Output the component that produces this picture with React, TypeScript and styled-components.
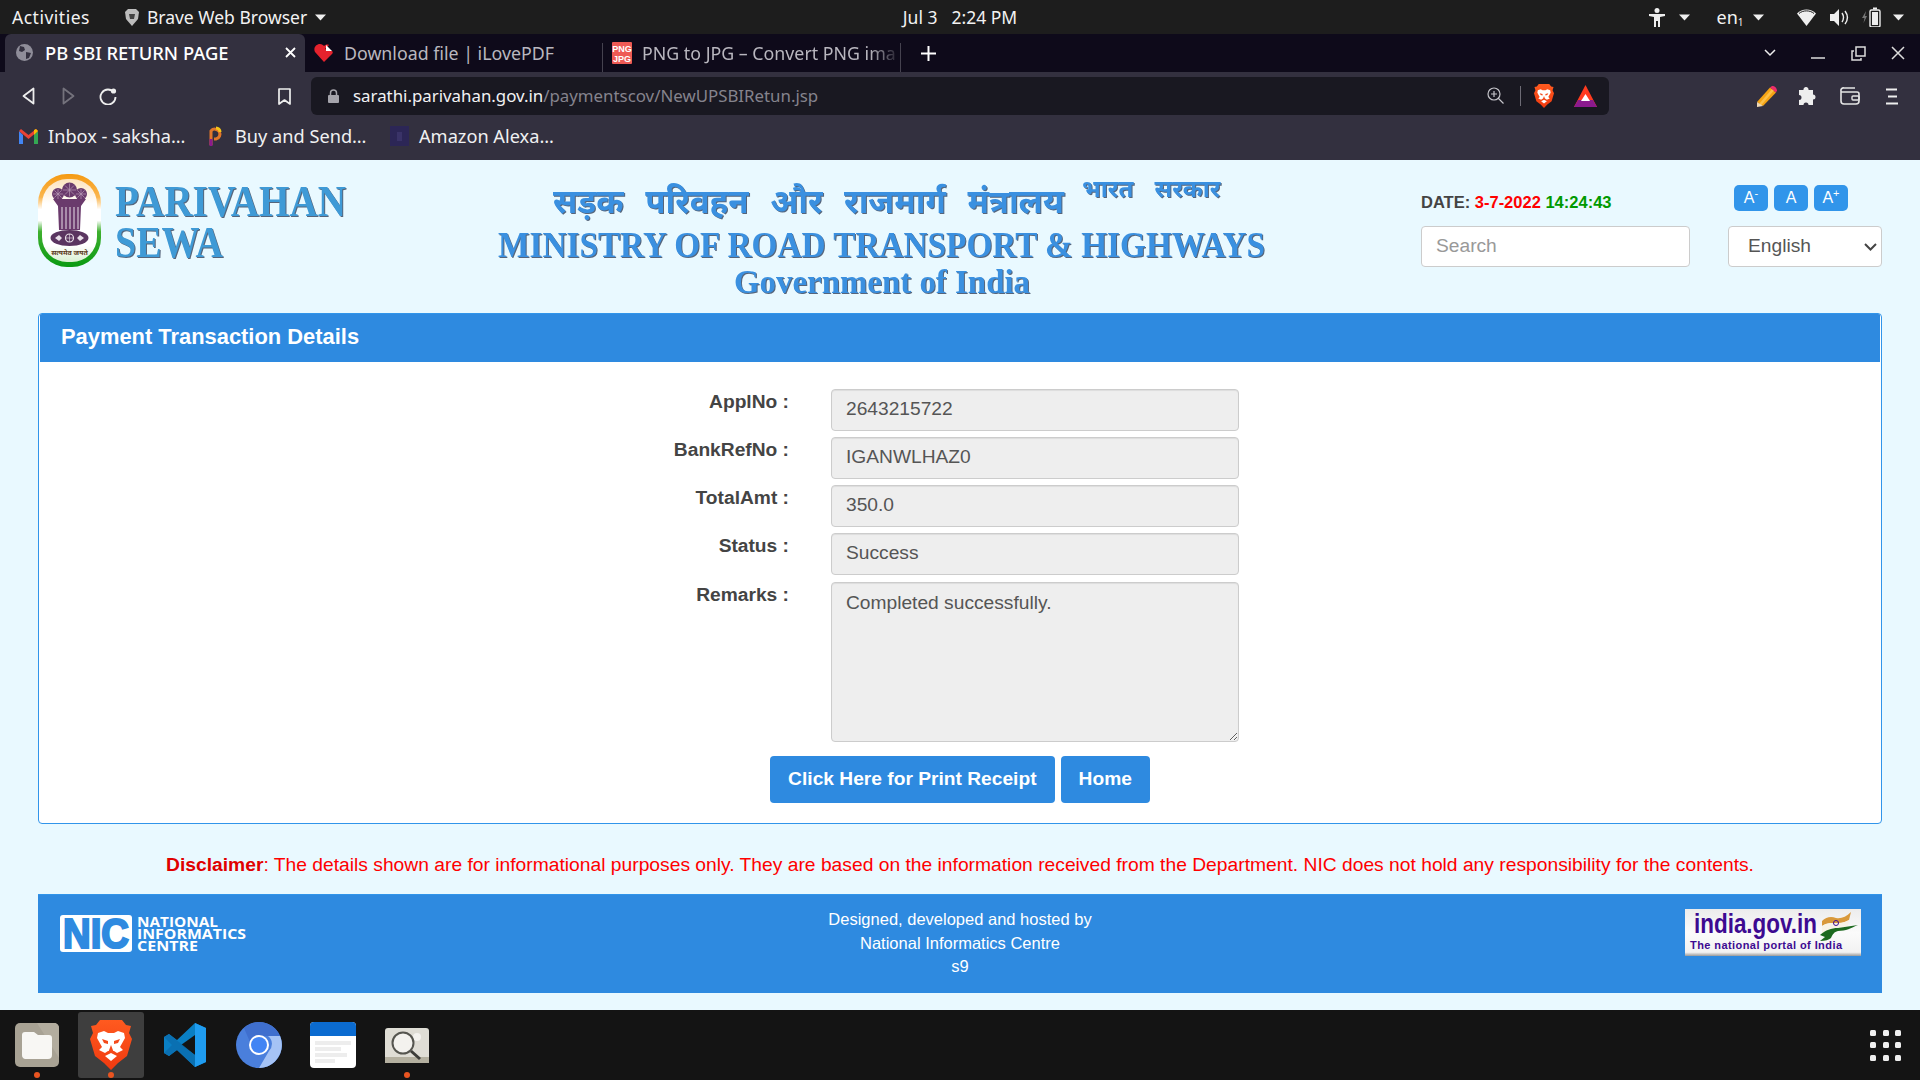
import React from "react"
import styled, { createGlobalStyle } from "styled-components"

const Global = createGlobalStyle`
  html, body { margin: 0; padding: 0; background: #e9f9ff; }
  * { box-sizing: border-box; }
`

const ubuntuLike = `"Noto Sans", "Open Sans", sans-serif`
const arial = `"Liberation Sans", Arial, sans-serif`
const serif = `"Liberation Serif", serif`
const hindi = `"Noto Sans", "DejaVu Sans", sans-serif`

const Screen = styled.div`
  width: 1920px;
  height: 1080px;
  overflow: hidden;
  display: flex;
  flex-direction: column;
  font-family: ${arial};
  svg { flex: none; }
`

/* gnome top bar */
const TopBar = styled.div`
  height: 34px;
  flex: none;
  background: #1d1d1d;
  color: #f2f2f2;
  font-family: ${ubuntuLike};
  font-size: 17.5px;
  display: grid;
  grid-template-columns: 1fr auto 1fr;
  align-items: center;
`
const TopLeft = styled.div`
  display: flex;
  align-items: center;
  padding-left: 12px;
`
const Activities = styled.span`
  letter-spacing: 0.5px;
`
const AppMenu = styled.div`
  display: flex;
  align-items: center;
  margin-left: 35px;
  gap: 8px;
`
const Clock = styled.div`
  display: flex;
  gap: 14px;
`
const Tray = styled.div`
  display: flex;
  align-items: center;
  justify-content: flex-end;
  padding-right: 12px;
`
const Slot = styled.div<{ $w: number; $ml?: number }>`
  width: ${p => p.$w}px;
  margin-left: ${p => p.$ml ?? 0}px;
  flex: none;
  display: flex;
  align-items: center;
  justify-content: center;
`
const Lang = styled.span`
  font-size: 18px;
  sub { font-size: 10px; vertical-align: -2px; }
`

/* browser tabs */
const TabStrip = styled.div`
  height: 38px;
  flex: none;
  background: #0e0a1a;
  font-family: ${ubuntuLike};
  display: flex;
  align-items: stretch;
  padding-left: 5px;
`
const ActiveTab = styled.div`
  width: 300px;
  background: #33303f;
  border-radius: 6px 6px 0 0;
  color: #fff;
  font-size: 18.4px;
  font-weight: 500;
  display: flex;
  align-items: center;
  padding: 0 9px 1px 11px;
  gap: 12px;
`
const TabTitle = styled.span`
  flex: 1;
  white-space: nowrap;
`
const Tab = styled.div<{ $w: number }>`
  width: ${p => p.$w}px;
  display: flex;
  align-items: center;
  gap: 10px;
  padding: 0 0 1px 9px;
  color: #b9b7bf;
  font-size: 17.8px;
  white-space: nowrap;
  position: relative;
  overflow: hidden;
  &::after {
    content: "";
    position: absolute;
    right: 0;
    top: 9px;
    bottom: 0;
    width: 1px;
    background: #45424f;
  }
`
const FadeText = styled.span`
  display: block;
  overflow: hidden;
  width: 100%;
  -webkit-mask-image: linear-gradient(to right, #000 88%, transparent 100%);
  mask-image: linear-gradient(to right, #000 88%, transparent 100%);
`
const WindowControls = styled.div`
  margin-left: auto;
  display: flex;
  align-items: center;
  padding-right: 2px;
`

/* browser toolbar */
const Toolbar = styled.div`
  height: 53px;
  flex: none;
  background: #33303f;
  display: flex;
  align-items: flex-start;
  padding: 5px 8px 0;
`
const ToolSlot = styled.div<{ $ml?: number }>`
  width: 40px;
  height: 38px;
  flex: none;
  margin-left: ${p => p.$ml ?? 0}px;
  display: flex;
  align-items: center;
  justify-content: center;
`
const UrlBar = styled.div`
  width: 1298px;
  height: 38px;
  margin-left: 7px;
  background: #191821;
  border-radius: 6px;
  display: flex;
  align-items: center;
  padding: 0 12px 1px 17px;
  font-family: ${ubuntuLike};
  font-size: 16.85px;
`
const UrlHost = styled.span`
  color: #f2f2f4;
  margin-left: 14px;
`
const UrlPath = styled.span`
  color: #85838d;
  flex: 1;
`
const UrlDivider = styled.span`
  width: 1px;
  height: 20px;
  background: #6d6b75;
  margin: 0 13px 0 16px;
`
const RewardsIcon = styled.svg`
  margin-left: 20px;
`
const ToolRight = styled.div`
  margin-left: auto;
  display: flex;
`

const Bookmarks = styled.div`
  height: 35px;
  flex: none;
  background: #33303f;
  display: flex;
  align-items: flex-start;
  padding: 0 0 0 19px;
  font-family: ${ubuntuLike};
  font-size: 18.2px;
  color: #f0f0f2;
`
const Bookmark = styled.div<{ $w: number; $gap: number }>`
  width: ${p => p.$w}px;
  display: flex;
  align-items: center;
  gap: ${p => p.$gap}px;
  height: 22px;
  white-space: nowrap;
`

/* parivahan page */
const Page = styled.div`
  flex: 1;
  background: #e9f9ff;
  padding: 0 38px;
  display: flex;
  flex-direction: column;
`
const Masthead = styled.header`
  height: 153px;
  flex: none;
  display: flex;
  align-items: flex-start;
`
const LogoSvg = styled.svg`
  display: block;
  margin-top: 14px;
  overflow: visible;
`
const BannerSvg = styled.svg`
  display: block;
  margin: 18px 0 0 152px;
  overflow: visible;
`
const LogoLetters = styled.g`
  filter: drop-shadow(1.4px 1.4px 0.5px rgba(60, 75, 100, 0.85));
`
const Tools = styled.div`
  margin-left: auto;
  width: 461px;
  padding-top: 25px;
  display: grid;
  grid-template-columns: 269px 154px;
  column-gap: 38px;
  row-gap: 15px;
  align-items: end;
`
const DateLine = styled.div`
  font-size: 16.5px;
  font-weight: 700;
  color: #444;
  line-height: 18px;
  white-space: nowrap;
`
const DateRed = styled.span`
  color: #ff0000;
`
const DateGreen = styled.span`
  color: #009a00;
`
const SizeButtons = styled.div`
  display: flex;
  gap: 6px;
  padding-left: 6px;
  height: 26px;
`
const SizeButton = styled.button`
  width: 34px;
  height: 26px;
  border: 0;
  padding: 0;
  border-radius: 5px;
  background: #3195ea;
  color: #fff;
  font-family: ${arial};
  font-size: 16px;
  sup { font-size: 11px; line-height: 0; }
`
const SearchInput = styled.input`
  width: 269px;
  height: 41px;
  border: 1px solid #ccc;
  border-radius: 4px;
  background: #fff;
  padding: 0 14px 2px;
  font-family: ${arial};
  font-size: 19.2px;
  outline: none;
  &::placeholder { color: #999; opacity: 1; }
`
const LangSelect = styled.select`
  width: 154px;
  height: 41px;
  border: 1px solid #ccc;
  border-radius: 4px;
  color: #555;
  padding: 0 0 2px 19px;
  font-family: ${arial};
  font-size: 19.2px;
  appearance: none;
  background: #fff url("data:image/svg+xml,%3Csvg xmlns='http://www.w3.org/2000/svg' width='13' height='8'%3E%3Cpath d='M1 1l5.500 5.500L12 1' fill='none' stroke='%23444' stroke-width='2'/%3E%3C/svg%3E") no-repeat right 4px center;
`

const Card = styled.section`
  height: 511px;
  flex: none;
  background: #fff;
  border: 1px solid #3195ea;
  border-radius: 4px;
  overflow: hidden;
`
const CardHeader = styled.div`
  height: 48px;
  margin: 0 1px;
  background: #2e8ae0;
  color: #fff;
  font-size: 21.9px;
  font-weight: 700;
  display: flex;
  align-items: center;
  padding: 0 0 2px 21px;
`
const Form = styled.form`
  padding-top: 27px;
  display: flex;
  flex-direction: column;
`
const Row = styled.div`
  display: grid;
  grid-template-columns: 750px 408px;
  column-gap: 42px;
  margin-bottom: 6px;
`
const RemarksRow = styled(Row)`
  margin-top: 1px;
`
const Label = styled.label`
  text-align: right;
  font-size: 19.2px;
  font-weight: 700;
  color: #444;
  line-height: 25px;
`
const FieldInput = styled.input`
  width: 408px;
  height: 42px;
  background: #eee;
  border: 1px solid #ccc;
  border-radius: 4px;
  box-shadow: inset 0 1px 1px rgba(0, 0, 0, 0.075);
  color: #555;
  padding: 0 14px 2px;
  font-family: ${arial};
  font-size: 19.2px;
  outline: none;
`
const FieldArea = styled.textarea`
  display: block;
  width: 408px;
  height: 160px;
  background: #eee;
  border: 1px solid #ccc;
  border-radius: 4px;
  box-shadow: inset 0 1px 1px rgba(0, 0, 0, 0.075);
  color: #555;
  padding: 6px 14px;
  font-family: ${arial};
  font-size: 19.2px;
  line-height: 27px;
  outline: none;
`
const Actions = styled.div`
  display: flex;
  justify-content: center;
  gap: 6px;
  margin-top: 8px;
`
const ActionButton = styled.button`
  height: 47px;
  border: 0;
  border-radius: 4px;
  background: #2e8ae0;
  color: #fff;
  padding: 0 18px 1px;
  font-family: ${arial};
  font-size: 19.2px;
  font-weight: 700;
`
const Disclaimer = styled.p`
  margin: 0;
  height: 70px;
  padding-top: 12px;
  display: flex;
  align-items: center;
  justify-content: center;
  color: #ff0000;
  font-size: 19.26px;
  white-space: pre;
  strong { color: #e00000; font-weight: 700; }
`
const Footer = styled.footer`
  height: 99px;
  flex: none;
  background: #2e8ae0;
  border-top: 1px solid #3195ea;
  display: grid;
  grid-template-columns: 1fr auto 1fr;
  color: #fff;
`
const FooterText = styled.div`
  text-align: center;
  font-size: 16.5px;
  line-height: 23.5px;
  padding-top: 13px;
`
const NicBox = styled.div`
  padding: 20px 0 0 22px;
`
const PortalBox = styled.div`
  padding: 14px 21px 0 0;
  display: flex;
  justify-content: flex-end;
  align-items: flex-start;
`
const BlockSvg = styled.svg`
  display: block;
  overflow: visible;
`

/* dock */
const Dock = styled.div`
  height: 70px;
  flex: none;
  background: #141414;
  display: flex;
  align-items: center;
`
const DockItem = styled.div<{ $active?: boolean; $running?: boolean }>`
  width: 66px;
  height: 66px;
  margin: 0 4px;
  border-radius: 3px;
  background: ${p => (p.$active ? "#3e3e3e" : "transparent")};
  display: flex;
  align-items: center;
  justify-content: center;
  position: relative;
  &::after {
    content: "";
    display: ${p => (p.$running ? "block" : "none")};
    position: absolute;
    left: 30px;
    bottom: 0;
    width: 6px;
    height: 6px;
    border-radius: 50%;
    background: #e95420;
  }
`
const AppGrid = styled.div`
  margin-left: auto;
  margin-right: 19px;
  display: grid;
  grid-template-columns: repeat(3, 6px);
  grid-auto-rows: 6px;
  gap: 6.5px;
`
const AppDot = styled.span`
  background: #eee;
  border-radius: 1.5px;
`

const Caret = () => (
  <svg width="11" height="7" viewBox="0 0 11 7"><path d="M0 .5h11L5.500 6.500z" fill="#eee" /></svg>
)

const BraveMark: React.FC<{ w: number; h: number }> = ({ w, h }) => (
  <svg width={w} height={h} viewBox="0 0 42 50">
    <defs>
      <linearGradient id="brv" x1="0" y1="0" x2="0" y2="1">
        <stop offset="0" stopColor="#ff5a1f" />
        <stop offset="1" stopColor="#f03a10" />
      </linearGradient>
    </defs>
    <path d="M10 0h22l4 5 5 1-2 7 3 6-5 17-9 7-7 7-7-7-9-7L0 19l3-6-2-7 5-1z" fill="url(#brv)" />
    <path d="M8 13l6-2 4 2h6l4-2 6 2 1 5-5 9 3 3-6 3-3-2h-6l-3 2-6-3 3-3-5-9z" fill="#fff" />
    <path d="M12 19l6 2v3l-4-1zM30 19l-6 2v3l4-1zM21 25l-3 8h6z" fill="#f4491a" />
    <path d="M15 36l6-3 6 3-6 5z" fill="#fff" />
  </svg>
)

const LionHead: React.FC<{ cx: number; cy: number; r: number }> = ({ cx, cy, r }) => (
  <g>
    <circle cx={cx} cy={cy} r={r} fill="#6a3a6c" />
    <path d={`M${cx - r + 1} ${cy}h${2 * r - 2}M${cx} ${cy - r + 1}v${2 * r - 2}M${cx - r * 0.6} ${cy - r * 0.6}l${r * 1.2} ${r * 1.2}M${cx + r * 0.6} ${cy - r * 0.6}l${-r * 1.2} ${r * 1.2}`} stroke="#b79ab4" strokeWidth=".7" />
  </g>
)

const Emblem = () => (
  <g>
    <defs>
      <linearGradient id="tri" x1="0" y1="0" x2="0" y2="1">
        <stop offset="0" stopColor="#f59a12" />
        <stop offset=".25" stopColor="#fbb64e" />
        <stop offset=".38" stopColor="#ffffff" />
        <stop offset=".5" stopColor="#ffffff" />
        <stop offset=".62" stopColor="#3fb02f" />
        <stop offset="1" stopColor="#0a9a12" />
      </linearGradient>
      <linearGradient id="inner" x1="0" y1="0" x2="0" y2="1">
        <stop offset="0" stopColor="#fde3bd" />
        <stop offset=".3" stopColor="#ffffff" />
        <stop offset=".8" stopColor="#ffffff" />
        <stop offset="1" stopColor="#d9f0d2" />
      </linearGradient>
    </defs>
    <rect x="0" y="0" width="63" height="93" rx="29" fill="url(#tri)" />
    <rect x="4" y="5" width="55" height="83" rx="25" fill="url(#inner)" />
    <LionHead cx={20} cy={20} r={6} />
    <LionHead cx={31.500} cy={16} r={7.500} />
    <LionHead cx={43} cy={20} r={6} />
    <path d="M15 25h33l-5 7-1 24H21l-1-24z" fill="#6a3a6c" />
    <path d="M24 33v22M28 33v22M32 33v22M36 33v22M40 33v22" stroke="#e8dfe8" strokeWidth="1" />
    <ellipse cx="31.500" cy="64" rx="19" ry="8" fill="#5a3560" />
    <circle cx="31.500" cy="64" r="4" fill="none" stroke="#e8dfe8" strokeWidth="1.200" />
    <path d="M31.500 60v8M27.500 64h8" stroke="#e8dfe8" strokeWidth=".6" />
    <path d="M17 64l4-3 3 3-3 3zM46 64l-4-3-3 3 3 3z" fill="#e8dfe8" />
    <text x="31.500" y="81" fontSize="7" fontWeight="700" textAnchor="middle" fill="#5b3b20" fontFamily={hindi}>सत्यमेव जयते</text>
  </g>
)

const NicLogo = () => (
  <BlockSvg width="186" height="38" viewBox="0 0 186 38">
    <rect x="0" y="0" width="72" height="37" rx="3" fill="#fff" />
    <text x="3" y="33" fontFamily={arial} fontWeight="700" fontSize="42" fill="#2e8ae0" stroke="#2e8ae0" strokeWidth="2.200" textLength="66" lengthAdjust="spacingAndGlyphs">NIC</text>
    <g fontFamily={`"Open Sans", sans-serif`} fontWeight="700" fontSize="14" fill="#fff">
      <text x="77" y="11.500" textLength="81" lengthAdjust="spacingAndGlyphs">NATIONAL</text>
      <text x="77" y="24" textLength="109" lengthAdjust="spacingAndGlyphs">INFORMATICS</text>
      <text x="77" y="36" textLength="61" lengthAdjust="spacingAndGlyphs">CENTRE</text>
    </g>
  </BlockSvg>
)

const IndiaPortal = () => (
  <BlockSvg width="176" height="47" viewBox="0 0 176 47">
    <defs>
      <linearGradient id="prt" x1="0" y1="0" x2="0" y2="1">
        <stop offset="0" stopColor="#ececec" />
        <stop offset=".5" stopColor="#fbfbfb" />
        <stop offset=".92" stopColor="#f2f2f2" />
        <stop offset="1" stopColor="#9a9a9a" />
      </linearGradient>
    </defs>
    <rect width="176" height="47" fill="url(#prt)" />
    <text x="9" y="24" fontFamily={arial} fontWeight="700" fontSize="27" fill="#3d0a91" textLength="123" lengthAdjust="spacingAndGlyphs">india.gov.in</text>
    <text x="5" y="40" fontFamily={arial} fontWeight="700" fontSize="11" fill="#3d0a91" textLength="152" lengthAdjust="spacing">The national portal of India</text>
    <path d="M137 12c4-4 9-5 14-3 5 1 10-1 15-6l-2 8c-6 4-12 3-17 3-4 0-7 1-10 3z" fill="#d9993a" />
    <path d="M137 17c4-3 8-3 12-3 5 0 10 0 15-3l-1 6c-8 2-14 2-20 5l-6 3z" fill="#f8f3e6" />
    <path d="M135 26c6-5 11-7 18-7l20-3c-7 3-12 6-20 6-4 1-5 3-7 7-2 2-6 3-11 3l5-4z" fill="#1d6a1f" />
    <circle cx="151" cy="14" r="2.500" fill="none" stroke="#3d0a91" strokeWidth="1" />
  </BlockSvg>
)

const FolderTile = () => (
  <svg width="44" height="44" viewBox="0 0 44 44">
    <rect width="44" height="44" rx="5" fill="#a8a294" />
    <path d="M22 0h17a5 5 0 0 1 5 5v30z" fill="#b3ad9f" />
    <path d="M7 12a3 3 0 0 1 3-3h9l4 3h11a3 3 0 0 1 3 3v17a4 4 0 0 1-4 4H10a4 4 0 0 1-3-4z" fill="#f8f7f4" />
  </svg>
)

const CodeTile = () => (
  <svg width="44" height="44" viewBox="0 0 44 44">
    <path d="M32 0l11 5v34l-11 5-18-17-8 6-5-3v-16l5-3 8 6z" fill="#0a7fc4" />
    <path d="M32 0l11 5v34l-11 5z" fill="#1f9cf0" />
    <path d="M32 12L18 22l14 10z" fill="#141414" />
    <path d="M1 14l5-3 26 21v12L14 27 6 33l-5-3 8-8z" fill="#0a6fb0" opacity=".9" />
  </svg>
)

const ChromiumTile = () => (
  <svg width="46" height="46" viewBox="0 0 46 46">
    <circle cx="23" cy="23" r="23" fill="#4a7fdc" />
    <path d="M23 0a23 23 0 0 1 21 14H23a9 9 0 0 0-9 6L8 6a23 23 0 0 1 15-6z" fill="#3f6fce" />
    <path d="M44 14a23 23 0 0 1-21 32l10-17a10 10 0 0 0-1-15z" fill="#a5c3f5" />
    <circle cx="23" cy="23" r="10" fill="#fff" />
    <circle cx="23" cy="23" r="8" fill="#4285f4" />
  </svg>
)

const NotesTile = () => (
  <svg width="46" height="46" viewBox="0 0 46 46">
    <rect width="46" height="46" rx="4" fill="#fff" />
    <path d="M0 14V4a4 4 0 0 1 4-4h38a4 4 0 0 1 4 4v10z" fill="#0b6bd0" />
    <g fill="#ededed">
      <rect x="5" y="19" width="36" height="4" />
      <rect x="5" y="25" width="26" height="4" />
      <rect x="5" y="31" width="32" height="4" />
      <rect x="5" y="37" width="20" height="4" />
    </g>
  </svg>
)

const SearchTile = () => (
  <svg width="44" height="35" viewBox="0 0 44 35">
    <rect width="44" height="35" rx="3" fill="#dfddd5" />
    <rect y="29" width="44" height="6" fill="#b4b0a0" />
    <circle cx="32" cy="9" r="4" fill="#f4f3ef" />
    <circle cx="18" cy="15" r="10.500" fill="#f3f2ee" stroke="#55554f" strokeWidth="2" />
    <path d="M26 23l9 8" stroke="#3c3c38" strokeWidth="3" />
  </svg>
)

const fields = [
  { label: "ApplNo :", value: "2643215722" },
  { label: "BankRefNo :", value: "IGANWLHAZ0" },
  { label: "TotalAmt :", value: "350.0" },
  { label: "Status :", value: "Success" },
]

const App: React.FC = () => {
  return (
    <Screen>
      <Global />
      <TopBar>
        <TopLeft>
          <Activities>Activities</Activities>
          <AppMenu>
            <svg width="14" height="17" viewBox="0 0 14 17"><path d="M3 0h8l3 3-1 7-6 7-6-7L0 3z" fill="#bdbdbd" /><path d="M4 5h6l-1 5H5z" fill="#444" /></svg>
            <span>Brave Web Browser</span>
            <Caret />
          </AppMenu>
        </TopLeft>
        <Clock>
          <span>Jul 3</span>
          <span>2:24 PM</span>
        </Clock>
        <Tray>
          <Slot $w={24}>
            <svg width="16" height="19" viewBox="0 0 16 19"><circle cx="8" cy="2.500" r="2.500" fill="#eee" /><path d="M0 6h16v2l-5 1v10H9v-6H7v6H5V9L0 8z" fill="#eee" /></svg>
          </Slot>
          <Slot $w={20} $ml={5}><Caret /></Slot>
          <Slot $w={36} $ml={18}><Lang>en<sub>1</sub></Lang></Slot>
          <Slot $w={20}><Caret /></Slot>
          <Slot $w={24} $ml={26}>
            <svg width="19" height="17" viewBox="0 0 19 17"><path d="M9.500 17L0 4.500C5-1 14-1 19 4.500z" fill="#eee" /><path d="M2 4.500c4-3.500 11-3.500 15 0" fill="none" stroke="#1d1d1d" strokeWidth="1" /></svg>
          </Slot>
          <Slot $w={24} $ml={9}>
            <svg width="19" height="17" viewBox="0 0 19 17"><path d="M0 5h4l5-5v17l-5-5H0z" fill="#eee" /><path d="M12 4c2 3 2 6 0 9M15 2c3 4 3 9 0 13" fill="none" stroke="#eee" strokeWidth="1.400" /></svg>
          </Slot>
          <Slot $w={24} $ml={9}>
            <svg width="20" height="20" viewBox="0 0 20 20"><path d="M4 4L0 11h2.500L1.500 16 5 9H3z" fill="#777" /><rect x="8" y="3" width="10" height="17" rx="1.500" fill="none" stroke="#eee" strokeWidth="1.400" /><rect x="10" y="5" width="6" height="13" fill="#eee" /><rect x="11" y="0.500" width="4" height="2" fill="#eee" /></svg>
          </Slot>
          <Slot $w={20} $ml={4}><Caret /></Slot>
        </Tray>
      </TopBar>

      <TabStrip>
        <ActiveTab>
          <svg width="17" height="17" viewBox="0 0 17 17"><circle cx="8.500" cy="8.500" r="8.500" fill="#8f8d99" /><path d="M4 2l4 1 1 3-3 2-3-1zM10 8l5 1-2 5-3 1z" fill="#33303f" /></svg>
          <TabTitle>PB SBI RETURN PAGE</TabTitle>
          <svg width="11" height="11" viewBox="0 0 11 11"><path d="M1 1l9 9M10 1l-9 9" stroke="#fff" strokeWidth="1.800" /></svg>
        </ActiveTab>
        <Tab $w={298}>
          <svg width="20" height="20" viewBox="0 0 20 20"><path d="M10 19L1 9C-1 5 2 1 6 1c2 0 3 1 4 2 1-1 3-2 5-1l-4 4 7 2c1 1 1 2 0 3z" fill="#e5222d" /><path d="M12 2l6 6h-6z" fill="#fff" /></svg>
          <span>Download file | iLovePDF</span>
        </Tab>
        <Tab $w={298}>
          <svg width="20" height="22" viewBox="0 0 20 22">
            <rect width="20" height="22" rx="1" fill="#ee5a55" />
            <text x="10" y="10" textAnchor="middle" fontFamily={arial} fontSize="9" fontWeight="700" fill="#fff">PNG</text>
            <text x="10" y="20" textAnchor="middle" fontFamily={arial} fontSize="9" fontWeight="700" fill="#fff">JPG</text>
          </svg>
          <FadeText>PNG to JPG – Convert PNG ima</FadeText>
        </Tab>
        <Slot $w={54}>
          <svg width="15" height="15" viewBox="0 0 15 15"><path d="M7.500 0v15M0 7.500h15" stroke="#fff" strokeWidth="2" /></svg>
        </Slot>
        <WindowControls>
          <Slot $w={40}>
            <svg width="12" height="8" viewBox="0 0 12 8"><path d="M1 1l5 5 5-5" fill="none" stroke="#eee" strokeWidth="1.500" /></svg>
          </Slot>
          <Slot $w={40} $ml={8}>
            <svg width="14" height="14" viewBox="0 0 14 14"><path d="M0 12h14" stroke="#ddd" strokeWidth="1.500" /></svg>
          </Slot>
          <Slot $w={40}>
            <svg width="15" height="15" viewBox="0 0 15 15"><rect x="5" y="1" width="9" height="9" fill="none" stroke="#ddd" strokeWidth="1.500" /><path d="M3 5H1v9h9v-2" fill="none" stroke="#ddd" strokeWidth="1.500" /></svg>
          </Slot>
          <Slot $w={40}>
            <svg width="14" height="14" viewBox="0 0 14 14"><path d="M1 1l12 12M13 1L1 13" stroke="#ddd" strokeWidth="1.500" /></svg>
          </Slot>
        </WindowControls>
      </TabStrip>

      <Toolbar>
        <ToolSlot>
          <svg width="13" height="18" viewBox="0 0 13 18"><path d="M11.500 1.500v15L1.500 9z" fill="none" stroke="#eee" strokeWidth="1.800" strokeLinejoin="round" /></svg>
        </ToolSlot>
        <ToolSlot>
          <svg width="13" height="18" viewBox="0 0 13 18"><path d="M1.500 1.500v15l10-7.500z" fill="none" stroke="#74727c" strokeWidth="1.800" strokeLinejoin="round" /></svg>
        </ToolSlot>
        <ToolSlot>
          <svg width="18" height="18" viewBox="0 0 18 18"><path d="M15 5.500A7.500 7.500 0 1 0 16.500 10" fill="none" stroke="#eee" strokeWidth="1.800" /><circle cx="14.500" cy="4" r="2.600" fill="#eee" /></svg>
        </ToolSlot>
        <ToolSlot $ml={136}>
          <svg width="13" height="17" viewBox="0 0 13 17"><path d="M1 1h11v15l-5.500-4L1 16z" fill="none" stroke="#eee" strokeWidth="1.700" strokeLinejoin="round" /></svg>
        </ToolSlot>
        <UrlBar>
          <svg width="11" height="14" viewBox="0 0 11 14"><path d="M2.500 6V4a3 3 0 0 1 6 0v2" fill="none" stroke="#a5a4ab" strokeWidth="1.500" /><rect y="6" width="11" height="8" rx="1" fill="#a5a4ab" /></svg>
          <UrlHost>sarathi.parivahan.gov.in</UrlHost>
          <UrlPath>/paymentscov/NewUPSBIRetun.jsp</UrlPath>
          <svg width="17" height="17" viewBox="0 0 17 17"><circle cx="7" cy="7" r="6" fill="none" stroke="#c5c4ca" strokeWidth="1.200" /><path d="M7 4v6M4 7h6M11 11l5.500 5.500" stroke="#c5c4ca" strokeWidth="1.200" /></svg>
          <UrlDivider />
          <BraveMark w={20} h={24} />
          <RewardsIcon width="23" height="22" viewBox="0 0 23 22">
            <path d="M11.500 0L23 22H0z" fill="#ff3b1f" />
            <path d="M0 22l4-7h15l4 7z" fill="#8b1a8e" />
            <path d="M11.500 9l4.500 7H7z" fill="#fff" />
          </RewardsIcon>
        </UrlBar>
        <ToolRight>
          <ToolSlot>
            <svg width="22" height="21" viewBox="0 0 22 21"><path d="M0 16L13 1.500l6 5L6 20z" fill="#f5a313" /><path d="M2 18L15 3l2 1.500L4 19.500z" fill="#fbc04a" /><path d="M13 1.500L15 0c2-.5 5 2 5 4.500l-1 2z" fill="#ed2e6a" /><path d="M0 16l6 4-6 1z" fill="#f1d9b5" /></svg>
          </ToolSlot>
          <ToolSlot>
            <svg width="19" height="19" viewBox="0 0 19 19"><path d="M7 0a2.500 2.500 0 0 1 2.500 3H14v4.500a2.500 2.500 0 1 1 0 5V18H9.500a2.500 2.500 0 1 0-5 0H0v-5a2.500 2.500 0 1 0 0-5V3h4.500A2.500 2.500 0 0 1 7 0z" fill="#eee" /></svg>
          </ToolSlot>
          <ToolSlot $ml={2}>
            <svg width="20" height="18" viewBox="0 0 20 18"><path d="M15 1H4a2.500 2.500 0 0 0-3 3v10a3 3 0 0 0 3 3h12a3 3 0 0 0 3-3V7a2 2 0 0 0-2-2H1" fill="none" stroke="#e5e5e5" strokeWidth="1.600" /><rect x="12" y="9" width="7" height="4" rx="1" fill="none" stroke="#e5e5e5" strokeWidth="1.400" /></svg>
          </ToolSlot>
          <ToolSlot $ml={2}>
            <svg width="12" height="17" viewBox="0 0 12 17"><path d="M0 1.500h11M2 8.500h9M0 15.500h12" stroke="#eee" strokeWidth="2" /></svg>
          </ToolSlot>
        </ToolRight>
      </Toolbar>

      <Bookmarks>
        <Bookmark $w={189} $gap={10}>
          <svg width="19" height="15" viewBox="0 0 19 15">
            <path d="M0 2v13h4V6z" fill="#4285f4" />
            <path d="M15 6v9h4V2z" fill="#34a853" />
            <path d="M0 2l2-2 7.500 6L17 0l2 2-9.500 8z" fill="#ea4335" />
            <path d="M15 1l2-1 2 2-4 4z" fill="#fbbc05" />
          </svg>
          <span>Inbox - saksha…</span>
        </Bookmark>
        <Bookmark $w={182} $gap={12}>
          <svg width="15" height="22" viewBox="0 0 15 22"><path d="M3 20V6a5 5 0 1 1 5 8H6" fill="none" stroke="#e2772a" strokeWidth="3" /><path d="M8 3a4 4 0 0 1 4 4" fill="none" stroke="#f5c518" strokeWidth="3" /><path d="M3 14v7" stroke="#8b1a8e" strokeWidth="3" /></svg>
          <span>Buy and Send…</span>
        </Bookmark>
        <Bookmark $w={170} $gap={10}>
          <svg width="19" height="20" viewBox="0 0 19 20"><rect width="19" height="20" fill="#2c2656" /><rect x="7" y="6" width="5" height="9" fill="#3a3368" /></svg>
          <span>Amazon Alexa…</span>
        </Bookmark>
      </Bookmarks>

      <Page>
        <Masthead>
          <LogoSvg width="308" height="94" viewBox="0 0 308 94">
            <Emblem />
            <LogoLetters fontFamily={serif} fontWeight="700" fill="#3f9ad6">
              <text x="77" y="42" fontSize="44" textLength="231" lengthAdjust="spacingAndGlyphs">PARIVAHAN</text>
              <text x="77" y="83" fontSize="44" textLength="108" lengthAdjust="spacingAndGlyphs">SEWA</text>
            </LogoLetters>
          </LogoSvg>
          <BannerSvg width="770" height="124" viewBox="0 0 770 124">
            <LogoLetters fill="#3a90e0" fontWeight="700">
              <text x="55" y="35" fontSize="33" wordSpacing="13" fontFamily={hindi}>सड़क परिवहन और राजमार्ग मंत्रालय</text>
              <text x="584" y="19" fontSize="24" wordSpacing="15" fontFamily={hindi}>भारत सरकार</text>
              <g fontFamily={serif}>
                <text x="0" y="79" fontSize="36" textLength="767" lengthAdjust="spacingAndGlyphs">MINISTRY OF ROAD TRANSPORT &amp; HIGHWAYS</text>
                <text x="236" y="115" fontSize="33" textLength="296" lengthAdjust="spacingAndGlyphs">Government of India</text>
              </g>
            </LogoLetters>
          </BannerSvg>
          <Tools>
            <DateLine>DATE: <DateRed>3-7-2022</DateRed> <DateGreen>14:24:43</DateGreen></DateLine>
            <SizeButtons>
              <SizeButton type="button">A<sup>-</sup></SizeButton>
              <SizeButton type="button">A</SizeButton>
              <SizeButton type="button">A<sup>+</sup></SizeButton>
            </SizeButtons>
            <SearchInput placeholder="Search" />
            <LangSelect defaultValue="English">
              <option>English</option>
            </LangSelect>
          </Tools>
        </Masthead>

        <Card>
          <CardHeader>Payment Transaction Details</CardHeader>
          <Form>
            {fields.map(f => (
              <Row key={f.label}>
                <Label>{f.label}</Label>
                <FieldInput readOnly value={f.value} />
              </Row>
            ))}
            <RemarksRow>
              <Label>Remarks :</Label>
              <FieldArea readOnly value="Completed successfully." />
            </RemarksRow>
            <Actions>
              <ActionButton type="button">Click Here for Print Receipt</ActionButton>
              <ActionButton type="button">Home</ActionButton>
            </Actions>
          </Form>
        </Card>

        <Disclaimer><strong>Disclaimer</strong>: The details shown are for informational purposes only. They are based on the information received from the Department. NIC does not hold any responsibility for the contents.</Disclaimer>

        <Footer>
          <NicBox><NicLogo /></NicBox>
          <FooterText>
            Designed, developed and hosted by<br />
            National Informatics Centre<br />
            s9
          </FooterText>
          <PortalBox><IndiaPortal /></PortalBox>
        </Footer>
      </Page>

      <Dock>
        <DockItem $running><FolderTile /></DockItem>
        <DockItem $active $running><BraveMark w={42} h={50} /></DockItem>
        <DockItem><CodeTile /></DockItem>
        <DockItem><ChromiumTile /></DockItem>
        <DockItem><NotesTile /></DockItem>
        <DockItem $running><SearchTile /></DockItem>
        <AppGrid>
          {Array.from({ length: 9 }).map((_, i) => <AppDot key={i} />)}
        </AppGrid>
      </Dock>
    </Screen>
  )
}

export default App
